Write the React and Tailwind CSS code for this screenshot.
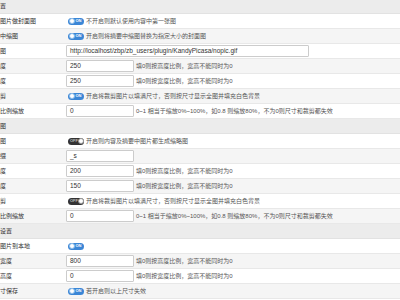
import React from "react";

const FONT = { fontFamily: '"Liberation Sans", "Noto Sans CJK SC", sans-serif' };

function Toggle({ on }) {
  if (on) {
    return (
      <span className="ml-[2px] inline-flex items-center w-[16px] h-[7px] rounded-full bg-[#3b86d6] pl-[0.5px] shrink-0">
        <span className="w-[6px] h-[6px] rounded-full bg-white border border-[#8bbbe9] shrink-0" />
        <span className="ml-[1px] text-[4px] leading-none font-bold text-white">ON</span>
      </span>
    );
  }
  return (
    <span className="ml-[2px] inline-flex items-center justify-between w-[16px] h-[7px] rounded-full bg-[#333333] pl-[2px] pr-[0.5px] shrink-0">
      <span className="text-[4px] leading-none font-bold text-[#bbbbbb]">OFF</span>
      <span className="w-[6px] h-[6px] rounded-full bg-white border border-[#999] shrink-0" />
    </span>
  );
}

function Field({ value, wide }) {
  return (
    <div
      className={
        wide
          ? "h-[12px] w-[243px] border border-[#cccccc] rounded-[1px] bg-white flex items-center pl-[3px] text-[6.5px] text-[#333] whitespace-nowrap overflow-hidden shrink-0"
          : "h-[12px] w-[68px] border border-[#cccccc] rounded-[1px] bg-white flex items-center pl-[3px] text-[6.5px] text-[#333] whitespace-nowrap overflow-hidden shrink-0"
      }
    >
      {value}
    </div>
  );
}

function Desc({ children }) {
  return <span className="text-[6px] leading-none text-[#555] whitespace-nowrap">{children}</span>;
}

function Row({ label, alt, children }) {
  return (
    <div
      className={
        alt
          ? "flex h-[15px] border-b border-[#e8e8e8] bg-[#f5f5f5]"
          : "flex h-[15px] border-b border-[#e8e8e8] bg-white"
      }
    >
      <div className="w-[62px] shrink-0 flex items-center text-[6px] text-[#333] whitespace-nowrap overflow-hidden">
        {label}
      </div>
      <div className="flex items-center pl-[4px] gap-[2px] min-w-0">{children}</div>
    </div>
  );
}

function Header({ title, first }) {
  return (
    <div
      className={
        first
          ? "h-[14px] flex items-center bg-[#ececec] border-b border-[#e2e2e2] text-[6px] text-[#333]"
          : "h-[15px] flex items-center bg-[#ececec] border-b border-[#e2e2e2] text-[6px] text-[#333]"
      }
    >
      {title}
    </div>
  );
}

const H = "填0则按高度比例，宽高不能同时为0";
const W = "填0则按宽度比例，宽高不能同时为0";
const CROP = "开启将裁剪图片以填满尺寸，否则按尺寸显示全图并填充白色背景";
const SCALE = "0~1 相当于缩放0%~100%，如0.8 则缩放80%，不为0则尺寸和裁剪都失效";

export default function App() {
  return (
    <div className="w-[400px] h-[300px] overflow-hidden bg-white" style={FONT}>
      <Header title="置" first />
      <Row label="图片做封面图">
        <Toggle on />
        <Desc>不开启则默认使用内容中第一张图</Desc>
      </Row>
      <Row label="中缩图" alt>
        <Toggle on />
        <Desc>开启则将摘要中缩图替换为指定大小的封面图</Desc>
      </Row>
      <Row label="图">
        <Field wide value="http://localhost/zbp/zb_users/plugin/KandyPicasa/nopic.gif" />
      </Row>
      <Row label="度" alt>
        <Field value="250" />
        <Desc>{H}</Desc>
      </Row>
      <Row label="度">
        <Field value="250" />
        <Desc>{W}</Desc>
      </Row>
      <Row label="剪" alt>
        <Toggle on />
        <Desc>{CROP}</Desc>
      </Row>
      <Row label="比例缩放">
        <Field value="0" />
        <Desc>{SCALE}</Desc>
      </Row>

      <Header title="图" />
      <Row label="图">
        <Toggle />
        <Desc>开启则内容及摘要中图片都生成缩略图</Desc>
      </Row>
      <Row label="缀" alt>
        <Field value="_s" />
      </Row>
      <Row label="度">
        <Field value="200" />
        <Desc>{H}</Desc>
      </Row>
      <Row label="度" alt>
        <Field value="150" />
        <Desc>{W}</Desc>
      </Row>
      <Row label="剪">
        <Toggle />
        <Desc>{CROP}</Desc>
      </Row>
      <Row label="比例缩放" alt>
        <Field value="0" />
        <Desc>{SCALE}</Desc>
      </Row>

      <Header title="设置" />
      <Row label="图片到本地">
        <Toggle on />
      </Row>
      <Row label="宽度" alt>
        <Field value="800" />
        <Desc>{H}</Desc>
      </Row>
      <Row label="高度">
        <Field value="0" />
        <Desc>{W}</Desc>
      </Row>
      <Row label="寸保存" alt>
        <Toggle on />
        <Desc>若开启则以上尺寸失效</Desc>
      </Row>
    </div>
  );
}
